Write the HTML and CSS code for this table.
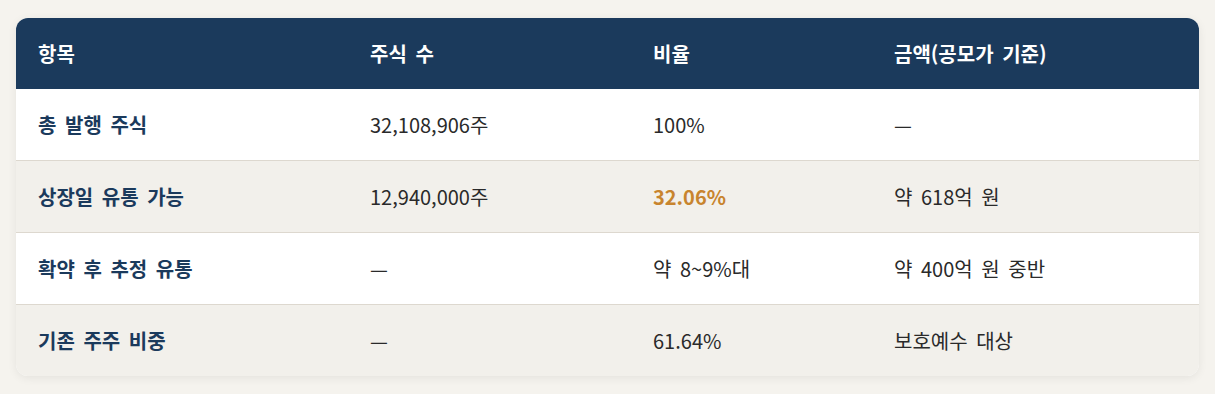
FILE: index.html
```html
<!DOCTYPE html>
<html lang="ko">
<head>
<meta charset="utf-8">
<link rel="stylesheet" href="styles.css">
</head>
<body>
<div class="card">
  <table class="tbl">
    <colgroup>
      <col class="c1"><col class="c2"><col class="c3"><col class="c4">
    </colgroup>
    <thead>
      <tr><th>항목</th><th>주식 수</th><th>비율</th><th>금액(공모가 기준)</th></tr>
    </thead>
    <tbody>
      <tr><td class="label">총 발행 주식</td><td>32,108,906주</td><td>100%</td><td>—</td></tr>
      <tr class="alt"><td class="label">상장일 유통 가능</td><td>12,940,000주</td><td class="hl">32.06%</td><td>약 618억 원</td></tr>
      <tr><td class="label">확약 후 추정 유통</td><td>—</td><td>약 8~9%대</td><td>약 400억 원 중반</td></tr>
      <tr class="alt last"><td class="label">기존 주주 비중</td><td>—</td><td>61.64%</td><td>보호예수 대상</td></tr>
    </tbody>
  </table>
</div>
</body>
</html>
```

FILE: styles.css
```css
html, body {
  margin: 0;
  padding: 0;
  background: #f5f3ee;
}
body {
  padding: 18px 16px;
  font-family: "Noto Sans CJK KR", "Noto Sans", sans-serif;
}
.card {
  background: #ffffff;
  border-radius: 12px;
  overflow: hidden;
  box-shadow: 0 2px 10px rgba(0, 0, 0, 0.07);
}
.tbl {
  width: 100%;
  border-collapse: collapse;
  table-layout: fixed;
  font-size: 20px;
  line-height: 27px;
  word-spacing: 3px;
}
.c1 { width: 332px; }
.c2 { width: 283px; }
.c3 { width: 241px; }
.c4 { width: auto; }
.tbl th {
  background: #1b3a5c;
  color: #ffffff;
  font-weight: 700;
  text-align: left;
  padding: 22px 22px;
}
.tbl td {
  color: #2a2a2a;
  padding: 22px 22px;
  border-top: 1px solid #ddd8cf;
}
.tbl tbody tr:first-child td {
  border-top: none;
}
.tbl tr.alt td {
  background: #f2f0eb;
}
.tbl td.label {
  color: #1b3a5c;
  font-weight: 700;
}
.tbl td.hl {
  color: #c8842e;
  font-weight: 700;
}
```
